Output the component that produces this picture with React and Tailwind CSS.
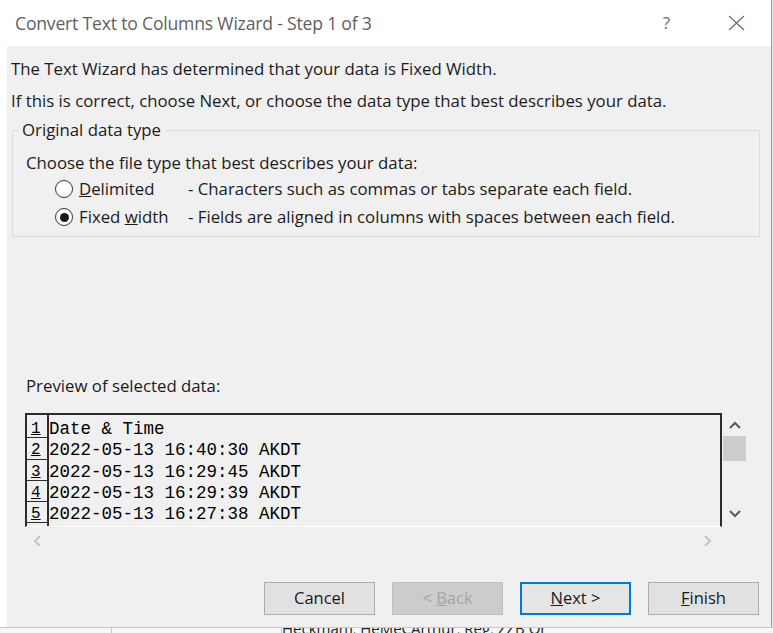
import React, { useState } from 'react';

const rows = [
  'Date & Time',
  '2022-05-13 16:40:30 AKDT',
  '2022-05-13 16:29:45 AKDT',
  '2022-05-13 16:29:39 AKDT',
  '2022-05-13 16:27:38 AKDT',
  '',
];

function Radio({ checked, onClick }) {
  return (
    <span
      onClick={onClick}
      className="w-[18px] h-[18px] rounded-full border border-[#333] bg-white flex items-center justify-center shrink-0"
    >
      {checked && <span className="w-[9px] h-[9px] rounded-full bg-[#1a1a1a]" />}
    </span>
  );
}

function Chevron({ dir, className }) {
  const d = {
    up: 'M2 8 L7 3 L12 8',
    down: 'M2 4 L7 9 L12 4',
    left: 'M8 2 L3 7 L8 12',
    right: 'M4 2 L9 7 L4 12',
  }[dir];
  return (
    <svg width="14" height="12" viewBox="0 0 14 12" className={className}>
      <path d={d} fill="none" stroke="currentColor" strokeWidth="2" />
    </svg>
  );
}

function Button({ children, disabled, focused }) {
  return (
    <button
      disabled={disabled}
      className={`w-[111px] h-[33px] text-[16.5px] ${
        disabled
          ? 'bg-[#cccccc] border border-[#bfbfbf] text-[#a6a6a6]'
          : focused
          ? 'bg-[#e5e5e5] border-2 border-[#0078d7] text-[#1a1a1a]'
          : 'bg-[#e1e1e1] border border-[#adadad] text-[#1a1a1a]'
      }`}
    >
      {children}
    </button>
  );
}

export default function App() {
  const [type, setType] = useState('fixed');

  return (
    <div className="w-[773px] h-[633px] flex flex-col overflow-hidden bg-white font-['Open_Sans',sans-serif]">
      <div className="flex h-[627px]">
        <div className="w-[771px] flex flex-col">
          {/* title bar */}
          <header className="h-[46px] bg-white flex items-center pl-[15px] pr-[26px] shrink-0">
            <span className="text-[17.6px] text-[#5f5f5f] tracking-[-0.2px]">
              Convert Text to Columns Wizard - Step 1 of 3
            </span>
            <span className="ml-auto text-[17px] text-[#6a6a6a] mr-[58px]">?</span>
            <svg width="17" height="16" viewBox="0 0 17 16">
              <path d="M1 1 L16 15 M16 1 L1 15" stroke="#6b6b6b" strokeWidth="1.2" />
            </svg>
          </header>

          <div className="flex flex-1">
            <div className="w-[7px] bg-white" />
            <main className="flex-1 bg-[#f0f0f0] flex flex-col text-[16.8px] text-[#1b1b1b]">
              <p className="pl-[4px] mt-[12px] leading-[22px]">
                The Text Wizard has determined that your data is Fixed Width.
              </p>
              <p className="pl-[4px] mt-[10px] leading-[22px]">
                If this is correct, choose Next, or choose the data type that best describes your data.
              </p>

              {/* original data type group */}
              <div className="ml-[5px] mt-[18px] w-[748px] h-[107px] border border-[#dcdcdc] px-[13px]">
                <div className="-mt-[12px] -ml-[8px] w-fit px-[4px] bg-[#f0f0f0] leading-[22px]">
                  Original data type
                </div>
                <p className="leading-[22px] mt-[11px]">Choose the file type that best describes your data:</p>
                <div className="flex items-center mt-[3px] h-[24px]">
                  <span className="ml-[29px]">
                    <Radio checked={type === 'delimited'} onClick={() => setType('delimited')} />
                  </span>
                  <span className="ml-[6px] w-[109px]">
                    <u>D</u>elimited
                  </span>
                  <span>- Characters such as commas or tabs separate each field.</span>
                </div>
                <div className="flex items-center mt-[4px] h-[24px]">
                  <span className="ml-[29px]">
                    <Radio checked={type === 'fixed'} onClick={() => setType('fixed')} />
                  </span>
                  <span className="ml-[6px] w-[109px]">
                    Fixed <u>w</u>idth
                  </span>
                  <span>- Fields are aligned in columns with spaces between each field.</span>
                </div>
              </div>

              <p className="pl-[19px] mt-[138px] leading-[22px]">Preview of selected data:</p>

              {/* preview */}
              <div className="ml-[18px] mt-[16px] flex">
                <div className="w-[697px] flex flex-col">
                  <div className="h-[114px] flex border-t-2 border-l-2 border-r-2 border-[#2b2b2b] border-b border-b-white overflow-hidden font-['Liberation_Mono',monospace] text-[17.5px] text-black">
                    <div className="w-[22px] border-r-2 border-[#2b2b2b] pt-[2px] shrink-0">
                      {rows.map((r, i) => (
                        <div key={i} className="h-[21.3px] leading-[21px] border-b border-[#2b2b2b] pl-[4px] pt-[2px] text-[16px]">
                          {i < 5 ? <u>{i + 1}</u> : ''}
                        </div>
                      ))}
                    </div>
                    <div className="pt-[4px]">
                      {rows.map((r, i) => (
                        <div key={i} className="h-[21.3px] leading-[21px] whitespace-pre">
                          {r}
                        </div>
                      ))}
                    </div>
                  </div>
                  <div className="h-[25px] flex items-center justify-between px-[7px] text-[#c4c4c4]">
                    <Chevron dir="left" />
                    <Chevron dir="right" />
                  </div>
                </div>
                <div className="w-[25px] h-[114px] flex flex-col items-center text-[#5a5a5a]">
                  <Chevron dir="up" className="mt-[7px]" />
                  <div className="w-[23px] h-[25px] bg-[#cdcdcd] mt-[4px]" />
                  <Chevron dir="down" className="mt-auto mb-[8px]" />
                </div>
              </div>

              {/* buttons */}
              <div className="flex gap-[17px] mt-[30px] ml-[257px]">
                <Button>Cancel</Button>
                <Button disabled>
                  &lt; <u>B</u>ack
                </Button>
                <Button focused>
                  <u>N</u>ext &gt;
                </Button>
                <Button>
                  <u>F</u>inish
                </Button>
              </div>
            </main>
          </div>
        </div>
        {/* sheet visible behind the dialog */}
        <div className="w-[2px] bg-[#e6e6e6] border-l border-[#9a9a9a]" />
      </div>
      <div className="h-[6px] flex bg-[#f7f7f7] border-t border-[#c8c8c8] overflow-hidden">
        <div className="w-[112px] border-r border-[#c8c8c8]" />
        <div className="w-[170px] border-r border-[#c8c8c8]" />
        <div className="flex-1 flex items-end text-[15px] leading-[10px] text-[#222] whitespace-nowrap">
          Heckman), HeMeCArthur, Reg, ZZB Or
        </div>
      </div>
    </div>
  );
}
